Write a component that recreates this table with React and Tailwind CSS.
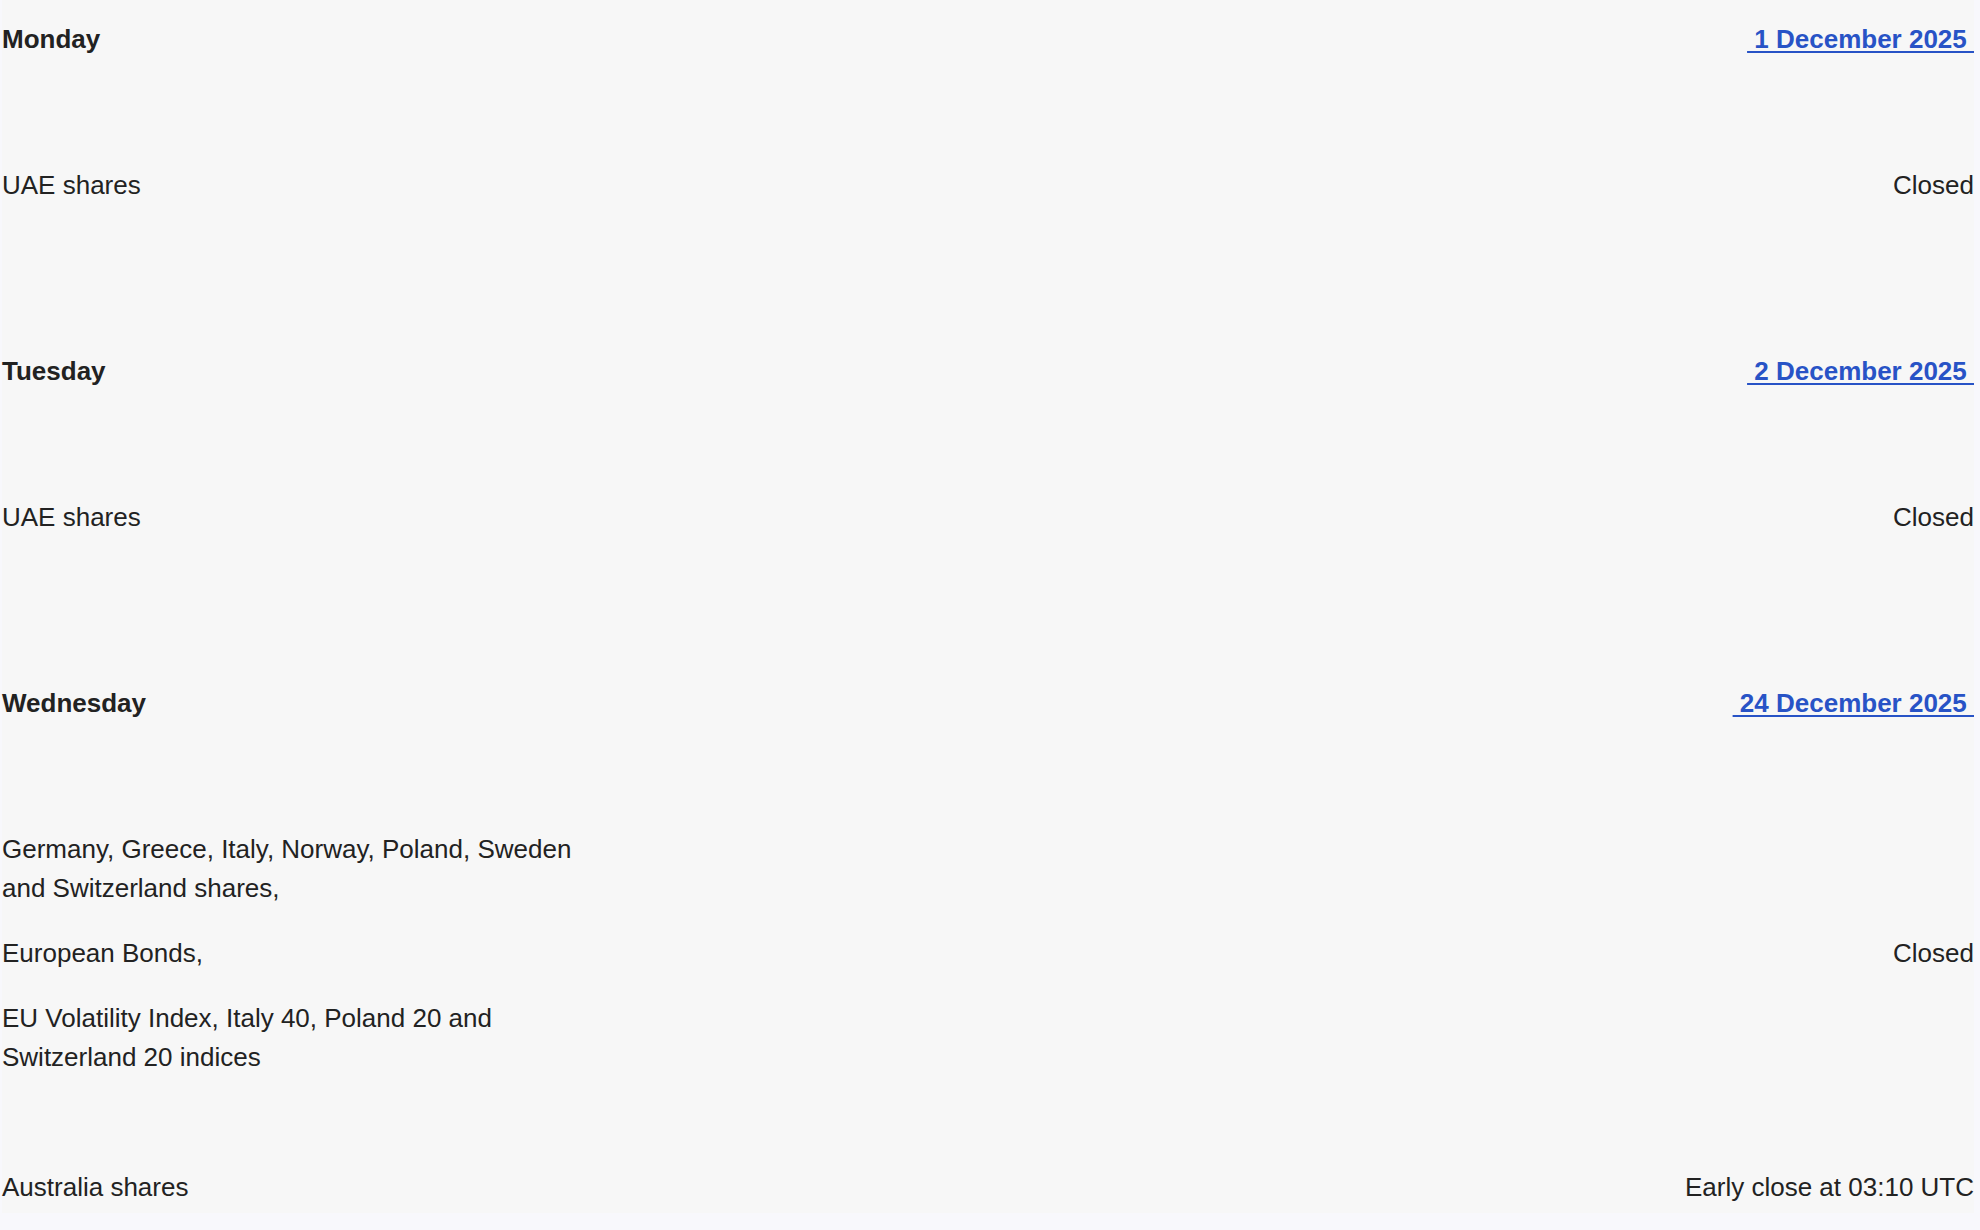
const days = [
    {
        day: 'Monday',
        date: '1 December 2025',
        rows: [{ markets: ['UAE shares'], status: 'Closed' }],
    },
    {
        day: 'Tuesday',
        date: '2 December 2025',
        rows: [{ markets: ['UAE shares'], status: 'Closed' }],
    },
    {
        day: 'Wednesday',
        date: '24 December 2025',
        rows: [
            {
                markets: [
                    'Germany, Greece, Italy, Norway, Poland, Sweden and Switzerland shares,',
                    'European Bonds,',
                    'EU Volatility Index, Italy 40, Poland 20 and Switzerland 20 indices',
                ],
                status: 'Closed',
            },
            { markets: ['Australia shares'], status: 'Early close at 03:10 UTC' },
        ],
    },
];

const DayBlock = ({ item }) => (
    <section className="pt-[20px]">
        <div className="flex justify-between items-center">
            <h3 className="font-bold">{item.day}</h3>
            <a
                href="#"
                className="font-bold text-[#2853c6] underline decoration-2 underline-offset-[3px]"
            >
                {'\u00a0' + item.date + '\u00a0'}
            </a>
        </div>

        <div className="mt-[107px] flex flex-col gap-[91px]">
            {item.rows.map((row, i) => (
                <div key={i} className="flex justify-between items-center">
                    <div className="w-[600px] flex flex-col gap-[26px]">
                        {row.markets.map((m) => (
                            <p key={m}>{m}</p>
                        ))}
                    </div>
                    <span>{row.status}</span>
                </div>
            ))}
        </div>
    </section>
);

export default function App() {
    return (
        <div className="min-h-[1230px] bg-[#f8f8fc]">
            <div
                className="ml-[2px] w-[1972px] bg-[#f7f7f7] pb-[6px] flex flex-col gap-[127px] text-[26px] leading-[39px] text-[#222222]"
                style={{ fontFamily: '"Liberation Sans", Arial, sans-serif' }}
            >
                {days.map((d) => (
                    <DayBlock key={d.day} item={d} />
                ))}
            </div>
        </div>
    );
}
